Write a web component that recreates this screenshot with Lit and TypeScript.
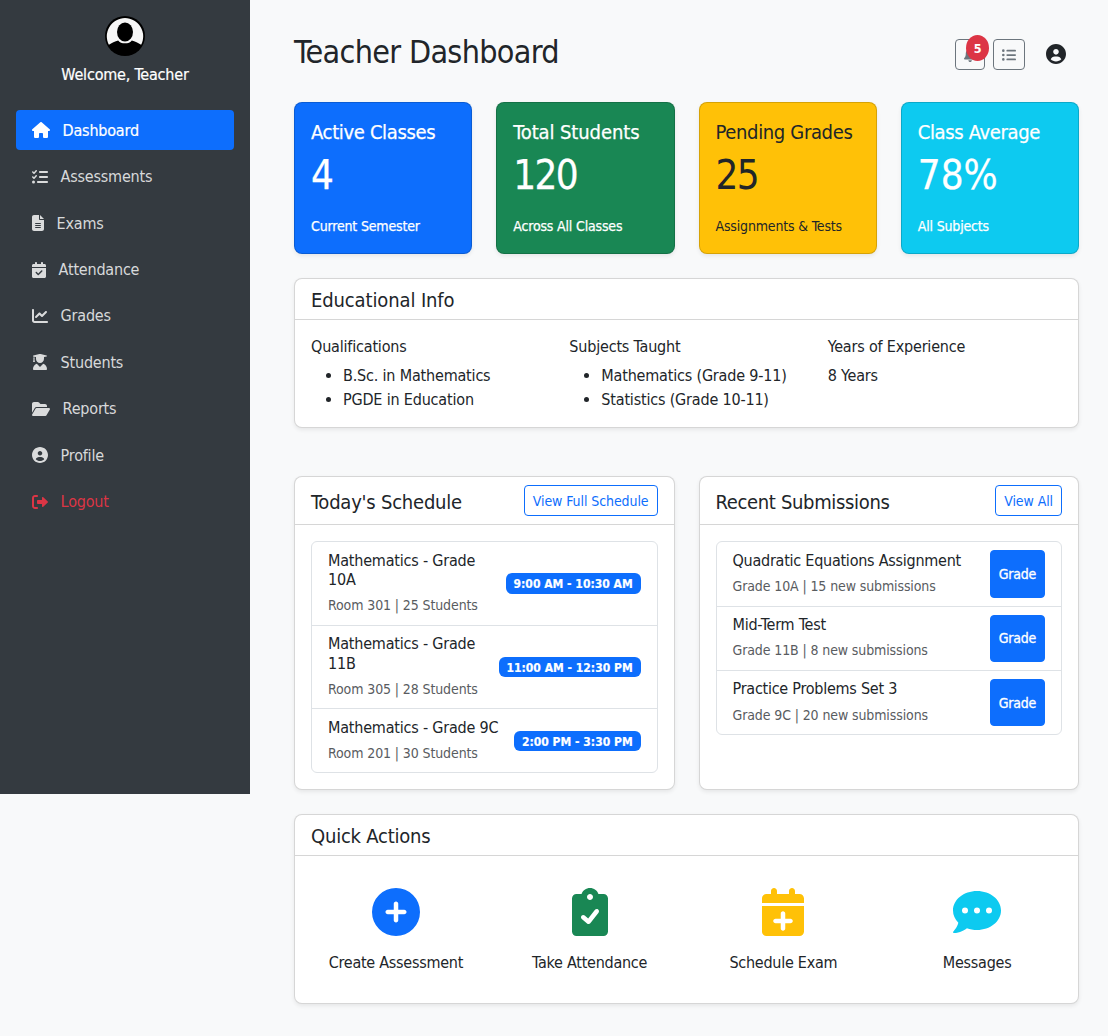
import { LitElement, html, css, svg } from "lit";
import { customElement, property } from "lit/decorators.js";
import { classMap } from "lit/directives/class-map.js";

const CAL =
  "M128 0c17.7 0 32 14.3 32 32V64H288V32c0-17.7 14.3-32 32-32s32 14.3 32 32V64h48c26.5 0 48 21.5 48 48v48H0V112C0 85.5 21.5 64 48 64H96V32c0-17.7 14.3-32 32-32zM0 192H448V464c0 26.5-21.5 48-48 48H48c-26.5 0-48-21.5-48-48V192z";

/** Icon outlines: [view box width, path]. Every view box is 512 high. */
const ICONS: Record<string, [number, string]> = {
  house: [576, "M575.8 255.5c0 18-15 32.1-32 32.1h-32l.7 160.2c0 2.7-.2 5.4-.5 8.1V472c0 22.1-17.9 40-40 40H456c-1.1 0-2.2 0-3.3-.1c-1.4 .1-2.8 .1-4.2 .1H416 392c-22.1 0-40-17.9-40-40V448 384c0-17.7-14.3-32-32-32H256c-17.7 0-32 14.3-32 32v64 24c0 22.1-17.9 40-40 40H160 128.1c-1.5 0-3-.1-4.5-.2c-1.2 .1-2.4 .2-3.6 .2H104c-22.1 0-40-17.9-40-40V360c0-.9 0-1.9 .1-2.8V287.6H32c-18 0-32-14-32-32.1c0-9 3-17 10-24L266.4 8c7-7 15-8 22-8s15 2 21 7L564.8 231.5c8 7 12 15 11 24z"],
  tasks: [512, "M152.1 38.2c9.9 8.9 10.7 24 1.8 33.9l-72 80c-4.4 4.9-10.6 7.8-17.2 7.9s-12.9-2.4-17.6-7L7 113C-2.3 103.6-2.3 88.4 7 79s24.6-9.4 33.9 0l22.1 22.1 55.1-61.2c8.9-9.9 24-10.7 33.9-1.8zm0 160c9.9 8.9 10.7 24 1.8 33.9l-72 80c-4.4 4.9-10.6 7.8-17.2 7.9s-12.9-2.4-17.6-7L7 273c-9.4-9.4-9.4-24.6 0-33.9s24.6-9.4 33.9 0l22.1 22.1 55.1-61.2c8.9-9.9 24-10.7 33.9-1.8zM224 96c0-17.7 14.3-32 32-32H480c17.7 0 32 14.3 32 32s-14.3 32-32 32H256c-17.7 0-32-14.3-32-32zm0 160c0-17.7 14.3-32 32-32H480c17.7 0 32 14.3 32 32s-14.3 32-32 32H256c-17.7 0-32-14.3-32-32zM160 416c0-17.7 14.3-32 32-32H480c17.7 0 32 14.3 32 32s-14.3 32-32 32H192c-17.7 0-32-14.3-32-32zM48 368a48 48 0 1 1 0 96 48 48 0 1 1 0-96z"],
  file: [384, "M64 0C28.7 0 0 28.7 0 64V448c0 35.3 28.7 64 64 64H320c35.3 0 64-28.7 64-64V160H256c-17.7 0-32-14.3-32-32V0H64zM256 0V128H384L256 0zM112 256H272c8.8 0 16 7.2 16 16s-7.2 16-16 16H112c-8.8 0-16-7.2-16-16s7.2-16 16-16zm0 64H272c8.8 0 16 7.2 16 16s-7.2 16-16 16H112c-8.8 0-16-7.2-16-16s7.2-16 16-16zm0 64H272c8.8 0 16 7.2 16 16s-7.2 16-16 16H112c-8.8 0-16-7.2-16-16s7.2-16 16-16z"],
  calendarCheck: [448, CAL + "M329 305c9.4-9.4 9.4-24.6 0-33.9s-24.6-9.4-33.9 0l-95 95-47-47c-9.4-9.4-24.6-9.4-33.9 0s-9.4 24.6 0 33.9l64 64c9.4 9.4 24.6 9.4 33.9 0L329 305z"],
  calendarPlus: [448, CAL + "M200 272v56H144c-13.3 0-24 10.7-24 24s10.7 24 24 24h56v56c0 13.3 10.7 24 24 24s24-10.7 24-24V376h56c13.3 0 24-10.7 24-24s-10.7-24-24-24H248V272c0-13.3-10.7-24-24-24s-24 10.7-24 24z"],
  chart: [512, "M64 64c0-17.7-14.3-32-32-32S0 46.3 0 64V400c0 44.2 35.8 80 80 80H480c17.7 0 32-14.3 32-32s-14.3-32-32-32H80c-8.8 0-16-7.2-16-16V64zm406.6 86.6c12.5-12.5 12.5-32.8 0-45.3s-32.8-12.5-45.3 0L320 210.7l-57.4-57.4c-12.5-12.5-32.8-12.5-45.3 0l-112 112c-12.5 12.5-12.5 32.8 0 45.3s32.8 12.5 45.3 0L240 221.3l57.4 57.4c12.5 12.5 32.8 12.5 45.3 0l128-128z"],
  graduate: [512, "M45.63 79.75L52 81.25v58.5C45 143.9 40 151.3 40 160c0 8.375 4.625 15.38 11.12 19.75L35.5 242C33.75 248.9 37.63 256 43.13 256h41.75c5.5 0 9.375-7.125 7.625-13.1L76.88 179.8C83.38 175.4 88 168.4 88 160c0-8.75-5-16.12-12-20.25V87.13L128 99.63l.001 60.37c0 70.75 57.25 128 128 128s127.1-57.25 127.1-128L384 99.62l82.25-19.87c18.25-4.375 18.25-27 0-31.5l-190.4-46c-13-3-26.62-3-39.63 0l-190.6 46C27.5 52.63 27.5 75.38 45.63 79.75zM359.2 312.8l-103.2 103.2l-103.2-103.2c-69.93 22.3-120.8 87.2-120.8 164.5C32 496.5 47.53 512 66.67 512h378.7C464.5 512 480 496.5 480 477.3C480 400 429.1 335.1 359.2 312.8z"],
  folder: [576, "M88.7 223.8L0 375.8V96C0 60.7 28.7 32 64 32H181.5c17 0 33.3 6.7 45.3 18.7l26.5 26.5c12 12 28.3 18.7 45.3 18.7H416c35.3 0 64 28.7 64 64v32H144c-22.8 0-43.8 12.1-55.3 31.8zm27.6 16.1C122.1 230 132.6 224 144 224H544c11.5 0 22 6.1 27.7 16.1s5.7 22.2-.1 32.1l-112 192C453.9 474 443.4 480 432 480H32c-11.5 0-22-6.1-27.7-16.1s-5.7-22.2 .1-32.1l112-192z"],
  user: [512, "M256 0C114.6 0 0 114.6 0 256s114.6 256 256 256s256-114.6 256-256S397.4 0 256 0zM256 128c39.77 0 72 32.24 72 72S295.8 272 256 272c-39.76 0-72-32.24-72-72S216.2 128 256 128zM256 448c-52.93 0-100.9-21.53-135.7-56.29C136.5 349.9 176.5 320 224 320h64c47.54 0 87.54 29.88 103.7 71.71C356.9 426.5 308.9 448 256 448z"],
  logout: [512, "M96 480h64C177.7 480 192 465.7 192 448S177.7 416 160 416H96c-17.67 0-32-14.33-32-32V128c0-17.67 14.33-32 32-32h64C177.7 96 192 81.67 192 64S177.7 32 160 32H96C42.98 32 0 74.98 0 128v256C0 437 42.98 480 96 480zM504.8 238.5l-144.1-136c-6.975-6.578-17.2-8.375-26-4.594c-8.803 3.797-14.51 12.47-14.51 22.05l-.0918 72l-128-.001c-17.69 0-32.02 14.33-32.02 32v64c0 17.67 14.34 32 32.02 32l128 .001l.0918 71.1c0 9.578 5.707 18.25 14.51 22.05c8.803 3.781 19.03 1.984 26-4.594l144.1-136C514.4 264.4 514.4 247.6 504.8 238.5z"],
  bell: [448, "M256 32V49.88C328.5 61.39 384 124.2 384 200V233.4C384 278.8 399.5 322.9 427.8 358.4L442.7 377C448.5 384.2 449.6 394.1 445.6 402.4C441.6 410.7 433.2 416 424 416H24C14.77 416 6.365 410.7 2.369 402.4C-1.628 394.1-.504 384.2 5.26 377L20.17 358.4C48.54 322.9 64 278.8 64 233.4V200C64 124.2 119.5 61.39 192 49.88V32C192 14.33 206.3 0 224 0C241.7 0 256 14.33 256 32zM288 448c0 16.97-6.744 33.25-18.75 45.25C257.3 505.3 240.1 512 224 512S190.7 505.3 178.7 493.3C166.7 481.3 160 464.1 160 448H288z"],
  list: [512, "M48 48a48 48 0 1 1 0 96 48 48 0 1 1 0-96zM48 208a48 48 0 1 1 0 96 48 48 0 1 1 0-96zM48 368a48 48 0 1 1 0 96 48 48 0 1 1 0-96zM192 64H480a32 32 0 0 1 0 64H192a32 32 0 0 1 0-64zM192 224H480a32 32 0 0 1 0 64H192a32 32 0 0 1 0-64zM192 384H480a32 32 0 0 1 0 64H192a32 32 0 0 1 0-64z"],
  plus: [512, "M0 256a256 256 0 1 0 512 0A256 256 0 1 0 0 256zM256 368C269.3 368 280 357.3 280 344V280H344C357.3 280 368 269.3 368 256C368 242.7 357.3 232 344 232H280V168C280 154.7 269.3 144 256 144C242.7 144 232 154.7 232 168V232H168C154.7 232 144 242.7 144 256C144 269.3 154.7 280 168 280H232V344C232 357.3 242.7 368 256 368z"],
  clipboard: [384, "M336 64h-53.88C268.9 26.8 233.7 0 192 0S115.1 26.8 101.9 64H48C21.5 64 0 85.48 0 112v352C0 490.5 21.5 512 48 512h288c26.5 0 48-21.48 48-48v-352C384 85.48 362.5 64 336 64zM192 64c17.67 0 32 14.33 32 32c0 17.67-14.33 32-32 32S160 113.7 160 96C160 78.33 174.3 64 192 64zM282.9 262.8l-88 112c-4.047 5.156-10.02 8.438-16.53 9.062C177.6 383.1 176.8 384 176 384c-5.703 0-11.25-2.031-15.62-5.781l-56-48c-10.06-8.625-11.22-23.77-2.594-33.84c8.609-10.06 23.77-11.22 33.84-2.594l36.98 31.69l72.52-92.28c8.188-10.44 23.3-12.22 33.7-4.062C289.3 237.3 291.1 252.4 282.9 262.8z"],
  comment: [512, "M256 448c141.4 0 256-93.1 256-208S397.4 32 256 32S0 125.1 0 240c0 49.6 21.4 95 57 130.7c-12.6 50.9-54.3 95.2-54.8 95.8c-2.2 2.3-2.8 5.7-1.5 8.7S4.8 480 8 480c66.3 0 116-31.8 140.6-51.4c32.7 12.3 69 19.4 107.4 19.4zM128 208a32 32 0 1 1 0 64 32 32 0 1 1 0-64zM256 208a32 32 0 1 1 0 64 32 32 0 1 1 0-64zM384 208a32 32 0 1 1 0 64 32 32 0 1 1 0-64z"],
};

@customElement("ui-icon")
class UiIcon extends LitElement {
  @property() name = "";
  @property({ type: Number }) size = 16;
  static styles = css`
    :host { display: inline-flex; flex: none; }
    svg { display: block; fill: currentColor; fill-rule: evenodd; overflow: visible; }
  `;
  render() {
    const [w, d] = ICONS[this.name];
    return html`<svg viewBox="0 0 ${w} 512" width=${(w / 512) * this.size} height=${this.size}>${svg`<path d=${d}></path>`}</svg>`;
  }
}

const NAV = [
  ["house", "Dashboard"],
  ["tasks", "Assessments"],
  ["file", "Exams"],
  ["calendarCheck", "Attendance"],
  ["chart", "Grades"],
  ["graduate", "Students"],
  ["folder", "Reports"],
  ["user", "Profile"],
  ["logout", "Logout"],
];

const STATS = [
  ["blue", "Active Classes", "4", "Current Semester"],
  ["green", "Total Students", "120", "Across All Classes"],
  ["yellow", "Pending Grades", "25", "Assignments & Tests"],
  ["cyan", "Class Average", "78%", "All Subjects"],
];

const SCHEDULE = [
  ["Mathematics - Grade 10A", "Room 301 | 25 Students", "9:00 AM - 10:30 AM"],
  ["Mathematics - Grade 11B", "Room 305 | 28 Students", "11:00 AM - 12:30 PM"],
  ["Mathematics - Grade 9C", "Room 201 | 30 Students", "2:00 PM - 3:30 PM"],
];

const SUBMISSIONS = [
  ["Quadratic Equations Assignment", "Grade 10A | 15 new submissions"],
  ["Mid-Term Test", "Grade 11B | 8 new submissions"],
  ["Practice Problems Set 3", "Grade 9C | 20 new submissions"],
];

const ACTIONS = [
  ["plus", "blue", "Create Assessment"],
  ["clipboard", "green", "Take Attendance"],
  ["calendarPlus", "yellow", "Schedule Exam"],
  ["comment", "cyan", "Messages"],
];

@customElement("app-root")
class AppRoot extends LitElement {
  static styles = css`
    * { box-sizing: border-box; }
    :host {
      display: flex; align-items: flex-start; height: 1036px; overflow: hidden;
      background: #f8f9fa; color: #212529;
      font: 400 16px/24px Tahoma, "DejaVu Sans Condensed", "DejaVu Sans", sans-serif;
      letter-spacing: -0.0125em;
    }
    h1, h2, h3, h4, p, ul { margin: 0; font-weight: 400; }
    .sidebar { width: 250px; height: 794px; flex: none; padding: 16px; background: #343a40; color: #fff; }
    .who { display: flex; flex-direction: column; align-items: center; gap: 7px; -webkit-text-stroke: .2px; }
    .avatar { display: block; width: 40px; height: 40px; }
    .nav { display: flex; flex-direction: column; gap: 6.4px; margin-top: 23.4px; }
    .nav a {
      display: flex; align-items: center; gap: 12.6px; height: 40px; padding: 0 16px;
      border-radius: 4px; color: rgba(255, 255, 255, .82);
    }
    .nav a span { padding-top: 1px; }
    .nav a.active { background: #0d6efd; color: #fff; -webkit-text-stroke: .2px; }
    .nav a.danger { color: #dc3545; }
    main { flex: 1; min-width: 0; padding: 32px 29px 0 44px; }
    .top { display: flex; justify-content: space-between; height: 70px; }
    h1 { font-size: 32px; line-height: 40px; letter-spacing: -0.021em; }
    .tools { display: flex; gap: 8px; padding: 7px 13px 0 0; }
    .tool {
      position: relative; display: flex; align-items: center; justify-content: center;
      height: 31px; width: 30px; border: 1px solid #6c757d; border-radius: 4px; color: #6c757d;
    }
    .tool.wide { width: 32px; }
    .count {
      position: absolute; left: 10px; top: -5px; width: 23px; height: 26px; border-radius: 50%;
      background: #dc3545; color: #fff; font-size: 12.5px; font-weight: 700; line-height: 28px; text-align: center;
    }
    .me { margin: 4.5px 0 0 13px; }
    .stats { display: grid; grid-template-columns: repeat(4, 1fr); gap: 24px; }
    .card { border: 1px solid rgba(0, 0, 0, .16); border-radius: 8px; background: #fff; box-shadow: 0 2px 4px rgba(0, 0, 0, .075); }
    .stat { height: 152px; padding: 16px; color: #fff; -webkit-text-stroke: .25px; }
    .stat h3 { line-height: 26px; margin-bottom: 6px; font-size: 20px; letter-spacing: -0.0175em; }
    .stat .num { font-size: 40px; line-height: 48px; letter-spacing: -0.04em; }
    .stat small { display: block; margin-top: 15px; line-height: 24px; letter-spacing: -0.012em; }
    .stat.blue { background: #0d6efd; }
    .stat.green { background: #198754; }
    .stat.green h3 { letter-spacing: -0.005em; }
    .stat.yellow { background: #ffc107; color: #212529; -webkit-text-stroke: 0; }
    .stat.cyan { background: #0dcaf0; }
    .stat.cyan .num { letter-spacing: 0; }
    small { font-size: 14px; letter-spacing: -0.008em; }
    .head {
      display: flex; align-items: center; justify-content: space-between;
      padding: 8px 16px; border-bottom: 1px solid rgba(0, 0, 0, .16);
    }
    .head h2 { font-size: 20px; line-height: 26px; margin-bottom: -2px; letter-spacing: -0.006em; }
    .subs .head h2 { letter-spacing: -0.017em; }
    .sched .head h2, .quick .head h2 { letter-spacing: -0.011em; }
    .body { padding: 16px; }
    .info { margin-top: 24px; height: 150px; }
    .info .body { display: grid; grid-template-columns: repeat(3, 1fr); column-gap: 24px; letter-spacing: -0.0115em; }
    .info h4 { font-size: 16px; line-height: 21.2px; margin-bottom: 7px; }
    .info ul { padding-left: 32px; }
    .pair { display: grid; grid-template-columns: 1fr 1fr; gap: 24px; margin: 48px 0 24px; }
    .pair .card { height: 314px; }
    .btn {
      height: 31px; padding: 0 8px; border: 1px solid #0d6efd; border-radius: 4px;
      font-size: 14px; line-height: 30.5px; color: #0d6efd; white-space: nowrap; letter-spacing: -0.006em;
    }
    .btn.solid {
      display: flex; align-items: center; justify-content: center; flex: none;
      height: auto; width: 55px; padding: 1px 0 0; background: #0d6efd; color: #fff;
      letter-spacing: -0.015em; -webkit-text-stroke: .3px;
    }
    .items { margin-top: .45px; border: 1px solid #dee2e6; border-radius: 6px; }
    .item { display: flex; justify-content: space-between; align-items: center; padding: 8px 16px; }
    .item + .item { border-top: 1px solid #dee2e6; }
    .item h4 { padding-top: .6px; font-size: 16px; line-height: 19.2px; margin-bottom: 4px; }
    .item .sub { height: 23.4px; line-height: 24.4px; color: #595c5f; }
    .sched h4 { padding-right: 6px; }
    .subs .item { align-items: stretch; }
    .subs h4 { letter-spacing: -0.0155em; }
    .pill {
      flex: none; height: 20.4px; padding: 0 7.8px; border-radius: 6px; background: #0d6efd; color: #fff;
      font-size: 12px; font-weight: 700; line-height: 22px; white-space: nowrap; letter-spacing: .015px;
      -webkit-text-stroke: .2px;
    }
    .quick { height: 190px; }
    .quick .body { display: grid; grid-template-columns: repeat(4, 1fr); padding: 32px 0; margin: 0 4px; }
    .action { display: flex; flex-direction: column; align-items: center; gap: 16px; line-height: 22px; letter-spacing: -0.016em; }
    .action .blue { color: #0d6efd; }
    .action .green { color: #198754; }
    .action .yellow { color: #ffc107; }
    .action .cyan { color: #0dcaf0; }
  `;

  render() {
    return html`
      <aside class="sidebar">
        <div class="who">
          <svg class="avatar" viewBox="0 0 40 40">
            <circle cx="20" cy="20" r="20" fill="#000"></circle>
            <path d="M3.9 28.8A18.2 18.2 0 1 1 36.1 28.8C33.5 26.6 29.8 25.2 26.8 24.4C24.5 28.3 15.5 28.3 13.2 24.4C10.2 25.2 6.5 26.6 3.9 28.8z" fill="#f6f6f6"></path>
            <ellipse cx="20" cy="16" rx="8" ry="9.6" fill="#000"></ellipse>
          </svg>
          <span>Welcome, Teacher</span>
        </div>
        <nav class="nav">
          ${NAV.map(([icon, label], i) => html`
            <a class=${classMap({ active: i === 0, danger: label === "Logout" })}>
              <ui-icon name=${icon}></ui-icon><span>${label}</span>
            </a>`)}
        </nav>
      </aside>
      <main>
        <header class="top">
          <h1>Teacher Dashboard</h1>
          <div class="tools">
            <div class="tool"><ui-icon name="bell" size="14"></ui-icon><span class="count">5</span></div>
            <div class="tool wide"><ui-icon name="list" size="14"></ui-icon></div>
            <ui-icon class="me" name="user" size="20"></ui-icon>
          </div>
        </header>
        <section class="stats">
          ${STATS.map(([tone, title, num, note]) => html`
            <div class="card stat ${tone}">
              <h3>${title}</h3>
              <div class="num">${num}</div>
              <small>${note}</small>
            </div>`)}
        </section>
        <section class="card info">
          <div class="head"><h2>Educational Info</h2></div>
          <div class="body">
            <div><h4>Qualifications</h4><ul><li>B.Sc. in Mathematics</li><li>PGDE in Education</li></ul></div>
            <div><h4>Subjects Taught</h4><ul><li>Mathematics (Grade 9-11)</li><li>Statistics (Grade 10-11)</li></ul></div>
            <div><h4>Years of Experience</h4><p>8 Years</p></div>
          </div>
        </section>
        <div class="pair">
          <section class="card sched">
            <div class="head"><h2>Today's Schedule</h2><span class="btn">View Full Schedule</span></div>
            <div class="body"><div class="items">
              ${SCHEDULE.map(([title, sub, time]) => html`
                <div class="item">
                  <div><h4>${title}</h4><div class="sub"><small>${sub}</small></div></div>
                  <span class="pill">${time}</span>
                </div>`)}
            </div></div>
          </section>
          <section class="card subs">
            <div class="head"><h2>Recent Submissions</h2><span class="btn">View All</span></div>
            <div class="body"><div class="items">
              ${SUBMISSIONS.map(([title, sub]) => html`
                <div class="item">
                  <div><h4>${title}</h4><div class="sub"><small>${sub}</small></div></div>
                  <span class="btn solid">Grade</span>
                </div>`)}
            </div></div>
          </section>
        </div>
        <section class="card quick">
          <div class="head"><h2>Quick Actions</h2></div>
          <div class="body">
            ${ACTIONS.map(([icon, tone, label]) => html`
              <div class="action"><ui-icon class=${tone} name=${icon} size="48"></ui-icon><span>${label}</span></div>`)}
          </div>
        </section>
      </main>`;
  }
}
